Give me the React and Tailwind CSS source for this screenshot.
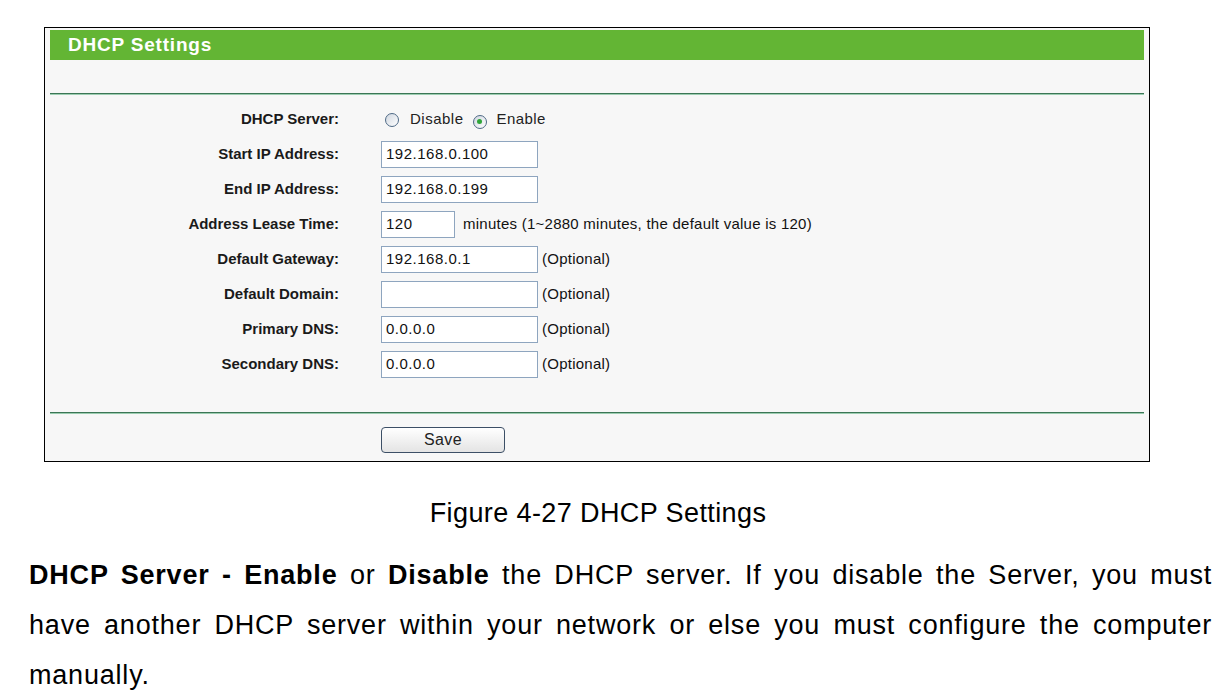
import React from 'react';

const rows = [
  { label: 'Start IP Address:', value: '192.168.0.100', width: 'w-[157px]' },
  { label: 'End IP Address:', value: '192.168.0.199', width: 'w-[157px]' },
  { label: 'Address Lease Time:', value: '120', width: 'w-[74px]', note: 'minutes (1~2880 minutes, the default value is 120)', noteGap: 'ml-[8px]' },
  { label: 'Default Gateway:', value: '192.168.0.1', width: 'w-[157px]', note: '(Optional)' },
  { label: 'Default Domain:', value: '', width: 'w-[157px]', note: '(Optional)' },
  { label: 'Primary DNS:', value: '0.0.0.0', width: 'w-[157px]', note: '(Optional)' },
  { label: 'Secondary DNS:', value: '0.0.0.0', width: 'w-[157px]', note: '(Optional)' },
];

function Radio({ checked }) {
  return (
    <span className="inline-flex w-[14px] h-[14px] rounded-full border border-[#4f6a86] bg-gradient-to-br from-[#d0d7e0] to-white items-center justify-center">
      {checked && <span className="w-[5px] h-[5px] rounded-full bg-[#2fa53a]" />}
    </span>
  );
}

function GreenLine() {
  return (
    <div>
      <div className="h-[1px] bg-[#3b7656]" />
      <div className="h-[1px] bg-[#9ccdb1]" />
    </div>
  );
}

function Row({ label, children }) {
  return (
    <div className="flex items-center h-[35px]">
      <div className="w-[289px] text-right font-bold text-[15px] text-[#1a1a1a]">{label}</div>
      <div className="ml-[42px] flex items-center">{children}</div>
    </div>
  );
}

export default function App() {
  return (
    <div className="bg-white min-h-[699px] pt-[27px] text-black" style={{ fontFamily: '"Liberation Sans", Arial, sans-serif' }}>
      <div className="ml-[44px] w-[1106px] h-[435px] border border-black bg-[#f7f7f7] px-[5px] pt-[2px]">
        <div className="h-[30px] bg-[#63b534] flex items-center pl-[18px]">
          <span className="text-white font-bold text-[19px] tracking-[0.8px]">DHCP Settings</span>
        </div>
        <div className="h-[33px]" />
        <GreenLine />
        <div className="pt-[7px] pb-[30px]">
          <Row label="DHCP Server:">
            <div className="flex items-center text-[15px] text-[#222] ml-[4px]">
              <Radio />
              <span className="ml-[11px] tracking-[0.5px]">Disable</span>
              <span className="ml-[9px]"><Radio checked /></span>
              <span className="ml-[10px] tracking-[0.4px]">Enable</span>
            </div>
          </Row>
          {rows.map(r => (
            <Row key={r.label} label={r.label}>
              <div className={`${r.width} h-[27px] bg-white border border-[#8ea5bf] pl-[4px] flex items-center text-[15px] tracking-[0.5px] text-[#111]`}>
                {r.value}
              </div>
              {r.note && (
                <span className={`${r.noteGap || 'ml-[4px]'} text-[15px] text-[#111] tracking-[0.25px]`}>{r.note}</span>
              )}
            </Row>
          ))}
        </div>
        <GreenLine />
        <div className="pt-[13px] pl-[331px]">
          <button className="w-[124px] h-[26px] rounded-[4px] border border-[#3c4f66] bg-gradient-to-b from-white to-[#e4e4e4] text-[16px] text-[#222] tracking-[0.4px]">
            Save
          </button>
        </div>
      </div>
      <div className="w-[1196px] text-center text-[27px] leading-[32px] tracking-[0.4px] mt-[35px]">
        Figure 4-27 DHCP Settings
      </div>
      <p className="ml-[29px] w-[1183px] mt-[21px] text-justify text-[27px] leading-[50px] tracking-[0.8px]">
        <b>DHCP Server - Enable</b> or <b>Disable</b> the DHCP server. If you disable the Server, you must have another DHCP server within your network or else you must configure the computer manually.
      </p>
    </div>
  );
}
